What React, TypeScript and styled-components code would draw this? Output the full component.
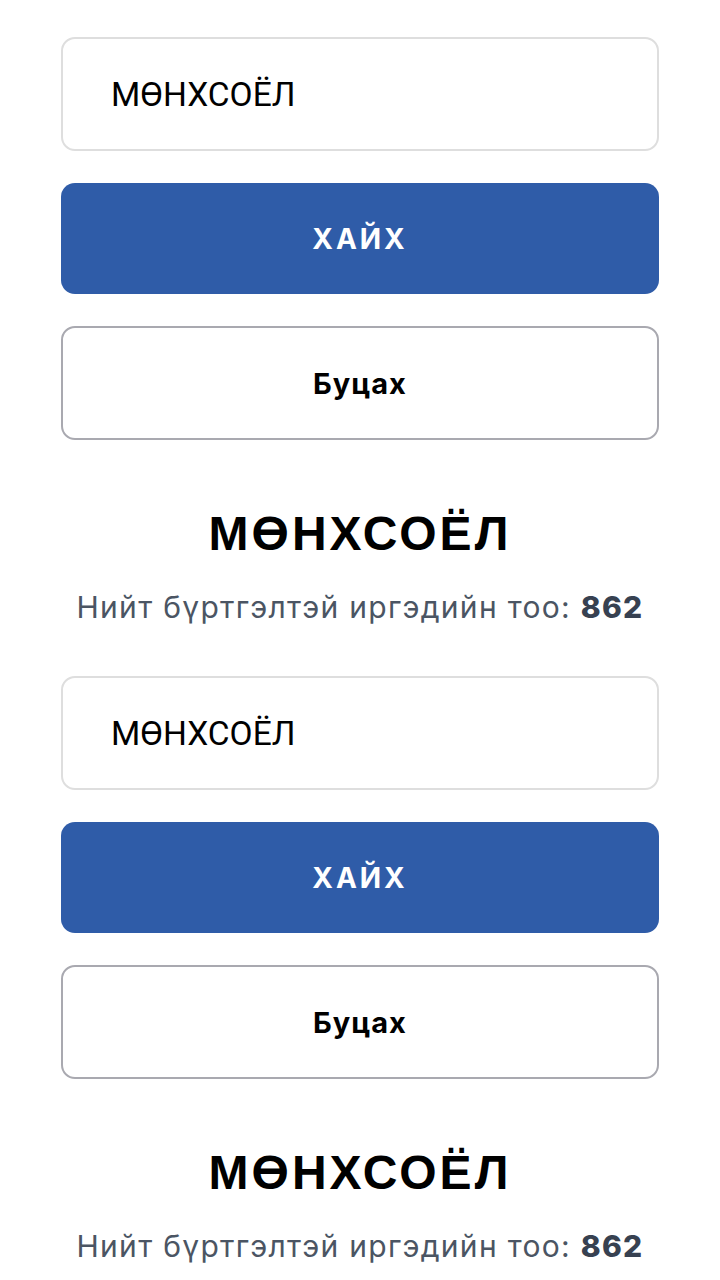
import React from "react";
import styled, { createGlobalStyle } from "styled-components";

const Global = createGlobalStyle`
  html, body { margin: 0; padding: 0; background: #ffffff; }
  body { font-family: Inter, Roboto, sans-serif; }
  * { box-sizing: border-box; }
`;

const Page = styled.div`
  display: flex;
  flex-direction: column;
  padding: 37px 61px 0;
  height: 1280px;
  overflow: hidden;
`;

const Section = styled.section`
  display: flex;
  flex-direction: column;
  padding-bottom: 51px;
`;

const SearchInput = styled.input`
  height: 114px;
  width: 100%;
  border: 2px solid #dedede;
  border-radius: 14px;
  padding: 0 0 0 48px;
  font-family: Roboto, sans-serif;
  font-size: 33.5px;
  color: #000;
  background: #fff;
  outline: none;
`;

const PrimaryButton = styled.button`
  margin-top: 32px;
  height: 111px;
  width: 100%;
  border: none;
  border-radius: 14px;
  background: #2f5ca8;
  color: #fff;
  font-family: Inter, sans-serif;
  font-weight: 700;
  font-size: 28px;
  letter-spacing: 3px;
`;

const BackButton = styled.button`
  margin-top: 32px;
  height: 114px;
  width: 100%;
  border: 2px solid #a9a9b0;
  border-radius: 14px;
  background: #fff;
  color: #000;
  font-family: Inter, sans-serif;
  font-weight: 700;
  font-size: 29px;
  letter-spacing: 1px;
`;

const Title = styled.h1`
  margin: 66px 0 0;
  text-align: center;
  font-family: "Liberation Sans", Arial, sans-serif;
  font-weight: 700;
  font-size: 48px;
  letter-spacing: 3px;
  line-height: 56px;
  color: #000;
`;

const Stats = styled.p`
  margin: 27px 0 0;
  text-align: center;
  font-family: Inter, sans-serif;
  font-size: 30px;
  letter-spacing: 1.3px;
  line-height: 36px;
  color: #4b5563;
`;

const Count = styled.strong`
  font-family: Inter, sans-serif;
  font-weight: 800;
  color: #374151;
`;

const blocks = [0, 1];

export default function App() {
  return (
    <>
      <Global />
      <Page>
        {blocks.map((b) => (
          <Section key={b}>
            <SearchInput defaultValue="МӨНХСОЁЛ" />
            <PrimaryButton>ХАЙХ</PrimaryButton>
            <BackButton>Буцах</BackButton>
            <Title>МӨНХСОЁЛ</Title>
            <Stats>
              Нийт бүртгэлтэй иргэдийн тоо: <Count>862</Count>
            </Stats>
          </Section>
        ))}
      </Page>
    </>
  );
}
